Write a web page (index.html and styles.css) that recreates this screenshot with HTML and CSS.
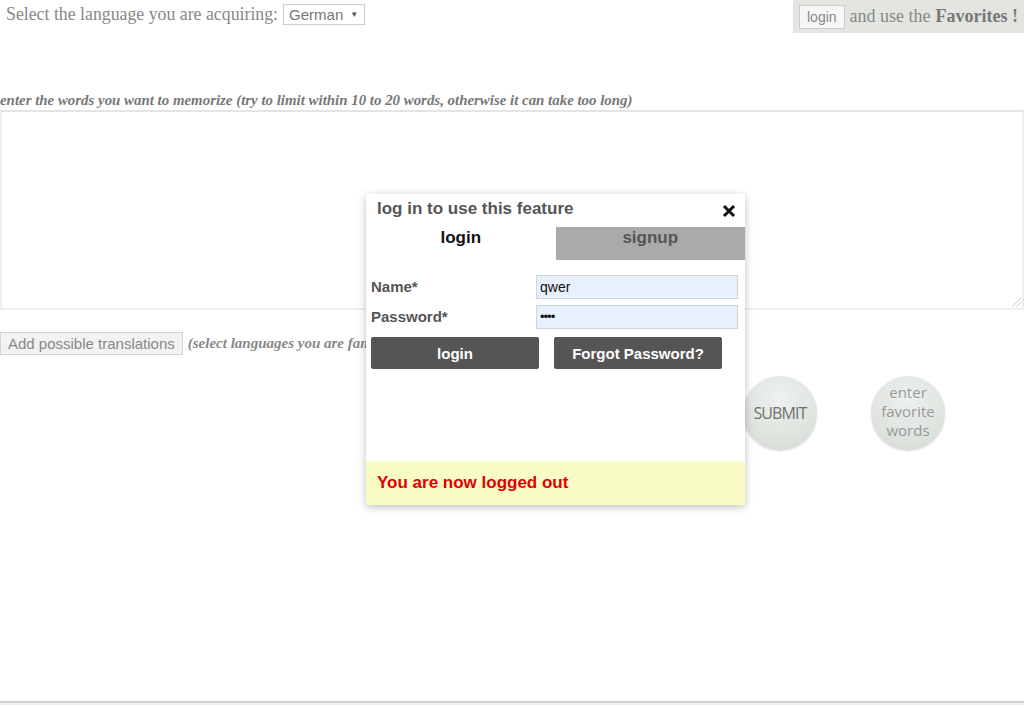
FILE: index.html
```html
<!DOCTYPE html>
<html>
<head>
<meta charset="utf-8">
<link rel="stylesheet" href="styles.css">
</head>
<body>
<div class="page">
  <div class="topbar">
    <div class="lang">Select the language you are acquiring: <span class="select">German <span class="caret">▼</span></span></div>
    <div class="fav"><button class="smallbtn">login</button> and use the <b>Favorites !</b></div>
  </div>
  <div class="hint">enter the words you want to memorize (try to limit within 10 to 20 words, otherwise it can take too long)</div>
  <div class="textarea"><span class="grip"></span></div>
  <div class="transrow">
    <button class="transbtn">Add possible translations</button>
    <span class="transhint">(select languages you are familiar with)</span>
  </div>
  <div class="circles">
    <div class="circle submit">SUBMIT</div>
    <div class="circle favw">enter<br>favorite<br>words</div>
  </div>
  <div class="footer"></div>

  <div class="dialog">
    <div class="dtitle">
      <span>log in to use this feature</span>
      <svg class="close" width="14" height="14" viewBox="0 0 14 14"><path d="M2 2L12 12M12 2L2 12" stroke="#111" stroke-width="3" stroke-linecap="butt"/></svg>
    </div>
    <div class="tabs">
      <div class="tab active">login</div>
      <div class="tab inactive">signup</div>
    </div>
    <div class="form">
      <div class="frow"><label>Name*</label><div class="input">qwer</div></div>
      <div class="frow"><label>Password*</label><div class="input pw">••••</div></div>
      <div class="btns">
        <button class="dbtn">login</button>
        <button class="dbtn">Forgot Password?</button>
      </div>
    </div>
    <div class="msg">You are now logged out</div>
  </div>
</div>
</body>
</html>
```
FILE: styles.css
```css
html, body { margin: 0; padding: 0; background: #fff; }
.page { position: relative; width: 1024px; height: 705px; overflow: hidden; font-family: "Liberation Serif", "Times New Roman", serif; }
.topbar { display: flex; justify-content: space-between; align-items: flex-start; height: 33px; }
.lang { padding: 4px 0 0 6px; font-size: 17.8px; color: #888; display: flex; align-items: center; gap: 5px; }
.select { display: inline-flex; align-items: center; height: 19px; padding: 0 6px 0 5px; border: 1px solid #ccc; font-family: "Liberation Sans", Arial, sans-serif; font-size: 15px; color: #777; background: #fff; gap: 7px; }
.caret { font-size: 8px; color: #555; }
.fav { height: 33px; background: #e2e5e0; padding-left: 6px; display: flex; align-items: center; gap: 5px; font-size: 18px; color: #888; box-sizing: border-box; width: 231px; }
.fav b { color: #777; }
.smallbtn { height: 24px; padding: 0 7px; background: #f6f6f6; border: 1px solid #ccc; font-family: "Liberation Sans", Arial, sans-serif; font-size: 14px; color: #888; margin-top: 0; }
.hint { margin-top: 58px; font-style: italic; font-weight: bold; font-size: 14.9px; color: #777; height: 19px; line-height: 19px; }
.textarea { position: relative; height: 196px; border: 2px solid #eee; border-top-color: #e4e4e4; }
.grip { position: absolute; right: 1px; bottom: 1px; width: 9px; height: 9px; background: linear-gradient(135deg, transparent 45%, #ccc 45%, #ccc 52%, transparent 52%, transparent 70%, #ccc 70%, #ccc 77%, transparent 77%); }
.transrow { margin-top: 22px; display: flex; align-items: center; gap: 5px; }
.transbtn { height: 23px; padding: 0 7px; background: #f2f2f2; border: 1px solid #d4d4d4; font-family: "Liberation Sans", Arial, sans-serif; font-size: 15px; color: #888; }
.transhint { font-style: italic; font-weight: bold; font-size: 15px; color: #888; }
.circles { display: flex; gap: 54px; padding-left: 743px; margin-top: 21px; }
.circle { width: 74px; height: 74px; border-radius: 50%; display: flex; align-items: center; justify-content: center; text-align: center; font-family: "Open Sans", "DejaVu Sans", sans-serif; background: radial-gradient(circle at 50% 30%, #eef1ee 0%, #dfe4df 60%, #d2d8d2 100%); box-shadow: 0 1px 2px rgba(0,0,0,0.18); }
.submit { font-size: 16px; color: #707070; letter-spacing: -0.9px; }
.favw { font-size: 15px; line-height: 19px; color: #999; padding-bottom: 4px; box-sizing: border-box; }
.footer { position: absolute; left: 0; right: 0; top: 701px; height: 2px; background: #cfcfcf; border-bottom: 2px solid #eee; }

.dialog { position: absolute; left: 366px; top: 194px; width: 379px; height: 311px; background: #fff; box-shadow: 0 2px 8px rgba(0,0,0,0.25); display: flex; flex-direction: column; font-family: "Liberation Sans", Arial, sans-serif; }
.dtitle { display: flex; justify-content: space-between; align-items: center; padding: 2px 9px 0 11px; height: 28px; box-sizing: border-box; font-size: 17px; font-weight: bold; color: #555; }
.close { margin-top: 3px; }
.tabs { display: flex; height: 38px; }
.tab { flex: 1; font-size: 17px; font-weight: bold; text-align: center; }
.tab.active { color: #111; padding-top: 6px; }
.tab.inactive { background: #aaa; color: #555; margin-top: 5px; padding-top: 1px; }
.form { padding: 15px 7px 0 5px; flex: 1; }
.frow { display: flex; align-items: center; justify-content: space-between; height: 24px; margin-bottom: 6px; }
.frow label { font-size: 15px; font-weight: bold; color: #555; margin-top: -2px; }
.input { width: 197px; height: 22px; background: #e8f0fe; border: 1px solid #ccd5e0; font-size: 14px; color: #111; padding-left: 3px; line-height: 22px; box-sizing: content-box; }
.input.pw { font-size: 13px; letter-spacing: -1px; }
.btns { display: flex; gap: 15px; margin-top: 8px; }
.dbtn { width: 168px; height: 32px; background: #555; color: #fff; border: none; border-radius: 2px; font-family: "Liberation Sans", Arial, sans-serif; font-size: 15px; font-weight: bold; }
.msg { height: 44px; background: #fafcc6; color: #e00000; font-size: 17px; font-weight: bold; padding-left: 11px; display: flex; align-items: center; }
```
